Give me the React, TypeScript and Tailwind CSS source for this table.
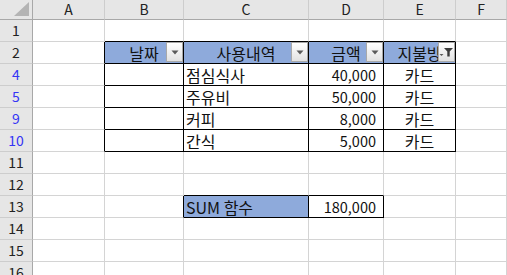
import React from "react";

const font = { fontFamily: '"Noto Sans CJK KR", "Noto Sans", sans-serif' };

const columns = ["A", "B", "C", "D", "E", "F"];

type Cell = { text?: string; align?: "left" | "right" | "center"; fill?: boolean; filter?: "arrow" | "funnel"; num?: boolean };

// each row: number, filtered flag, cells for A..F
const rows: { num: number; filtered?: boolean; cells: Record<string, Cell> }[] = [
  { num: 1, cells: {} },
  {
    num: 2,
    cells: {
      B: { text: "날짜", align: "center", fill: true, filter: "arrow" },
      C: { text: "사용내역", align: "center", fill: true, filter: "arrow" },
      D: { text: "금액", align: "center", fill: true, filter: "arrow" },
      E: { text: "지불방", align: "center", fill: true, filter: "funnel" },
    },
  },
  { num: 4, filtered: true, cells: { B: {}, C: { text: "점심식사", align: "left" }, D: { text: "40,000", align: "right", num: true }, E: { text: "카드", align: "center" } } },
  { num: 5, filtered: true, cells: { B: {}, C: { text: "주유비", align: "left" }, D: { text: "50,000", align: "right", num: true }, E: { text: "카드", align: "center" } } },
  { num: 9, filtered: true, cells: { B: {}, C: { text: "커피", align: "left" }, D: { text: "8,000", align: "right", num: true }, E: { text: "카드", align: "center" } } },
  { num: 10, filtered: true, cells: { B: {}, C: { text: "간식", align: "left" }, D: { text: "5,000", align: "right", num: true }, E: { text: "카드", align: "center" } } },
  { num: 11, cells: {} },
  { num: 12, cells: {} },
  { num: 13, cells: { C: { text: "SUM 함수", align: "left", fill: true }, D: { text: "180,000", align: "right", num: true } } },
  { num: 14, cells: {} },
  { num: 15, cells: {} },
  { num: 16, cells: {} },
];

// bordered ranges: table B2:E10 (rows idx 1..5) and C13:D13 (row idx 8)
function inBox(r: number, c: number) {
  if (r >= 1 && r <= 5 && c >= 1 && c <= 4) return true;
  if (r === 8 && (c === 2 || c === 3)) return true;
  return false;
}

function FilterButton({ kind }: { kind: "arrow" | "funnel" }) {
  return (
    <div className="absolute right-0 top-0 flex h-[20px] w-[17px] items-center justify-center border border-[#a9a9a9] bg-gradient-to-b from-white to-[#e2e2e2]">
      {kind === "arrow" ? (
        <svg width="8" height="5" viewBox="0 0 8 5">
          <path d="M0.5 0.5h7L4 4.5z" fill="#5a5a5a" />
        </svg>
      ) : (
        <svg width="15" height="12" viewBox="0 0 15 12">
          <path d="M0.5 8h4L2.5 10z" fill="#5a5a5a" />
          <path d="M5 2h9l-3.3 3.6V10.5H8.3V5.6z" fill="#3c3c3c" />
        </svg>
      )}
    </div>
  );
}

export default function App() {
  return (
    <div className="h-[275px] w-[507px] overflow-hidden bg-white text-[#111]" style={font}>
      <div className="grid grid-cols-[33px_72px_79px_125px_75px_72px_1fr] auto-rows-[22px] grid-rows-[20px]">
        {/* corner */}
        <div className="relative border-b border-r border-b-[#a8a8a8] border-r-[#a8a8a8] bg-[#e6e6e6]">
          <svg className="absolute bottom-[3px] right-[3px]" width="15" height="14" viewBox="0 0 15 14">
            <path d="M15 0V14H0z" fill="#b4b4b4" />
          </svg>
        </div>
        {columns.map((c) => (
          <div
            key={c}
            className="flex items-center justify-center border-b border-r border-b-[#a8a8a8] border-r-[#cdcdcd] bg-[#e6e6e6] text-[14px] text-[#222]"
          >
            {c}
          </div>
        ))}

        {rows.map((row, r) => (
          <React.Fragment key={row.num}>
            <div
              className={
                row.filtered
                  ? "flex items-center justify-center border-b border-r border-b-[#cdcdcd] border-r-[#a8a8a8] bg-[#e6e6e6] text-[14px] text-[#3535f5]"
                  : "flex items-center justify-center border-b border-r border-b-[#cdcdcd] border-r-[#a8a8a8] bg-[#e6e6e6] text-[14px] text-[#222]"
              }
            >
              {row.num}
            </div>
            {columns.map((col, c) => {
              const cell = row.cells[col] ?? {};
              const rightBlack = inBox(r, c) || inBox(r, c + 1);
              const bottomBlack = inBox(r, c) || inBox(r + 1, c);
              const borderR = rightBlack ? "border-r-black" : "border-r-[#d4d4d4]";
              const borderB = bottomBlack ? "border-b-black" : "border-b-[#d4d4d4]";
              const bg = cell.fill ? "bg-[#8eaadb]" : "bg-white";
              const size = cell.num ? "text-[14.5px]" : "text-[16px]";
              const align =
                cell.align === "right"
                  ? "justify-end pr-[7px]"
                  : cell.align === "center"
                  ? "justify-center"
                  : "justify-start pl-[2px]";
              return (
                <div
                  key={col}
                  className={`relative flex items-center whitespace-nowrap border-b border-r ${size} ${borderR} ${borderB} ${bg} ${align}`}
                >
                  {cell.text}
                  {cell.filter && <FilterButton kind={cell.filter} />}
                </div>
              );
            })}
          </React.Fragment>
        ))}
      </div>
    </div>
  );
}
